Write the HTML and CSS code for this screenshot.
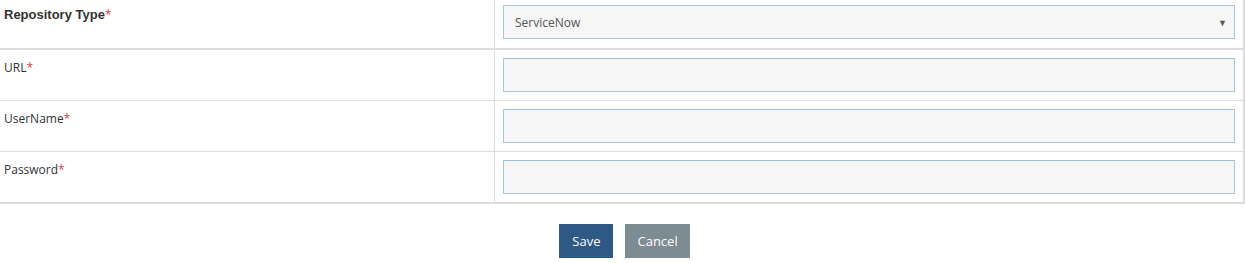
FILE: index.html
```html
<!DOCTYPE html>
<html lang="en">
<head>
    <meta charset="UTF-8">
    <title>Repository Settings</title>
    <link rel="stylesheet" href="styles.css">
</head>
<body>
    <div class="form-wrap">
        <table class="form-table">
            <tr class="row-type">
                <td class="label-cell"><span class="label-bold">Repository Type</span><span class="req">*</span></td>
                <td class="field-cell">
                    <div class="select-box">
                        <span>ServiceNow</span>
                        <span class="arrow">&#9660;</span>
                    </div>
                </td>
            </tr>
            <tr>
                <td class="label-cell">URL<span class="req">*</span></td>
                <td class="field-cell"><input type="text" class="text-input"></td>
            </tr>
            <tr>
                <td class="label-cell">UserName<span class="req">*</span></td>
                <td class="field-cell"><input type="text" class="text-input"></td>
            </tr>
            <tr>
                <td class="label-cell">Password<span class="req">*</span></td>
                <td class="field-cell"><input type="password" class="text-input"></td>
            </tr>
        </table>

        <div class="actions">
            <button class="btn btn-save">Save</button>
            <button class="btn btn-cancel">Cancel</button>
        </div>
    </div>
</body>
</html>
```

FILE: styles.css
```css
body {
    margin: 0;
    font-family: "Open Sans", Arial, sans-serif;
    font-size: 12px;
    color: #333;
    background: #fff;
}
.form-wrap {
    width: 1245px;
    overflow: hidden;
}
.form-table {
    border-collapse: collapse;
    width: 1245px;
    margin-top: -2px;
    border-top: 2px solid #ddd;
    border-right: 2px solid #ddd;
    border-bottom: 2px solid #ddd;
}
.form-table td {
    border-top: 1px solid #ddd;
    padding: 8px;
    vertical-align: top;
}
.form-table .row-type td {
    border-bottom: 2px solid #ddd;
}
.label-cell {
    width: 482px;
    padding-left: 4px !important;
    border-right: 1px solid #ddd;
    font-size: 12px;
    line-height: 20px;
}
.row-type .label-cell {
    padding-top: 5px !important;
    height: 35px;
}
.label-bold {
    font-family: "Liberation Sans", Arial, sans-serif;
    font-weight: bold;
    font-size: 13px;
}
.req {
    color: #e0443c;
}
.field-cell {
    padding: 8px 8px 8px 8px;
}
.row-type .field-cell {
    padding-top: 5px;
}
.select-box {
    display: flex;
    justify-content: space-between;
    align-items: center;
    height: 32px;
    padding: 0 7px 0 11px;
    background: #f6f6f6;
    border: 1px solid #a9c6d6;
    font-size: 12px;
    color: #555;
}
.arrow {
    font-size: 9px;
    color: #555;
}
.text-input {
    display: block;
    box-sizing: border-box;
    width: 100%;
    height: 34px;
    margin: 0;
    background: #f6f6f6;
    border: 1px solid #a9c6d6;
    border-top-color: #9fc0d2;
}
.actions {
    display: flex;
    justify-content: center;
    gap: 12px;
    padding-top: 20px;
    padding-left: 4px;
}
.btn {
    height: 34px;
    border: none;
    color: #fff;
    font-family: "Open Sans", Arial, sans-serif;
    font-size: 13px;
    padding: 0 13px;
}
.btn-save {
    background: #2f5985;
}
.btn-cancel {
    background: #7d8b93;
    padding: 0 12px;
}
```
